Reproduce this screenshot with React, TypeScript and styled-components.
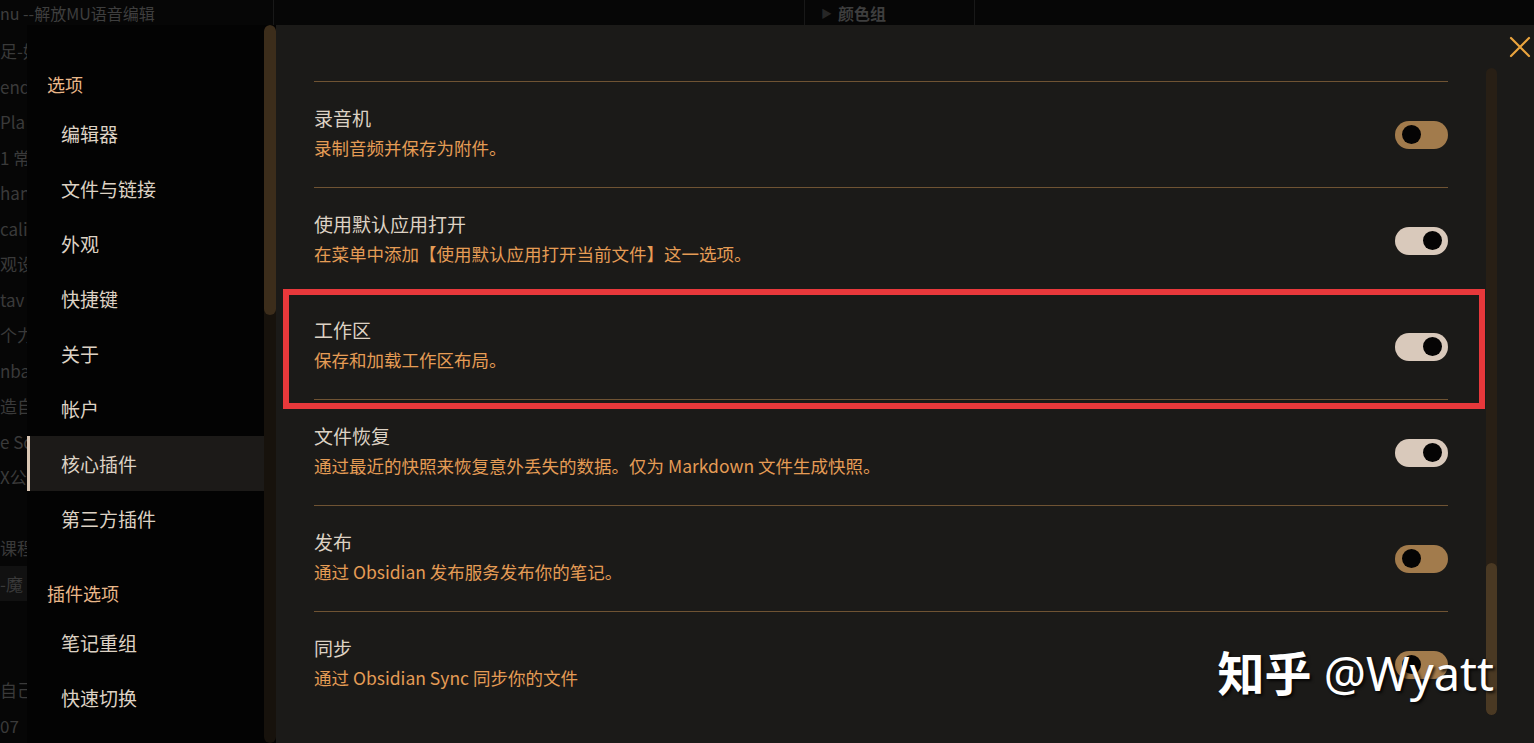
import { createGlobalStyle } from "styled-components";
import styled from "styled-components";

type PluginRow = {
  title: string;
  desc: string;
  enabled: boolean;
  highlight?: boolean;
};

const GlobalStyle = createGlobalStyle`
  html, body {
    margin: 0;
    padding: 0;
    background: #060606;
    overflow: hidden;
  }
  * {
    box-sizing: border-box;
  }
`;

const cjk = `"Noto Sans CJK SC", "Noto Sans", sans-serif`;

const Page = styled.div`
  width: 1534px;
  height: 743px;
  display: grid;
  grid-template-columns: 27px 1fr;
  grid-template-rows: 25px 1fr;
  background: #060606;
  font-family: ${cjk};
  overflow: hidden;
`;

/* dimmed app behind the modal */
const BackTopBar = styled.div`
  grid-column: 1 / 3;
  display: flex;
  align-items: center;
  color: #3e3e3e;
  font-size: 16px;
  white-space: nowrap;
  overflow: hidden;
`;

const BackPane = styled.div<{ $w: number; $pad?: number; $line?: boolean }>`
  width: ${({ $w }) => $w}px;
  height: 100%;
  flex-shrink: 0;
  display: flex;
  align-items: center;
  gap: 6px;
  padding-left: ${({ $pad }) => $pad ?? 0}px;
  border-right: ${({ $line }) => ($line ? "1px solid #181818" : "none")};
  overflow: hidden;
`;

const BackStrip = styled.div`
  display: flex;
  flex-direction: column;
  padding-top: 8px;
  overflow: hidden;
`;

const BackItem = styled.div<{ $shade?: boolean }>`
  height: 36.5px;
  line-height: 36px;
  font-size: 17px;
  color: #3a3a3a;
  white-space: nowrap;
  overflow: hidden;
  background: ${({ $shade }) => ($shade ? "#111111" : "transparent")};
`;

/* modal */
const Modal = styled.div`
  position: relative;
  display: flex;
  min-height: 0;
`;

const Sidebar = styled.div`
  display: flex;
  width: 249px;
  flex-shrink: 0;
  background: #030303;
`;

const Nav = styled.nav`
  width: 237px;
  padding-top: 44px;
  display: flex;
  flex-direction: column;
`;

const NavHeader = styled.div`
  padding-left: 20px;
  height: 30px;
  line-height: 30px;
  font-size: 18px;
  color: #e9b789;
  margin-bottom: 7px;
`;

const NavItem = styled.div<{ $active?: boolean }>`
  height: 55px;
  line-height: 55px;
  padding-left: ${({ $active }) => ($active ? "31px" : "34px")};
  font-size: 19px;
  color: #ddd2c4;
  background: ${({ $active }) => ($active ? "#1c1a18" : "transparent")};
  border-left: ${({ $active }) => ($active ? "3px solid #d9c6b3" : "none")};
`;

const NavGap = styled.div`
  height: 32px;
`;

const ScrollTrack = styled.div<{ $w: number; $bg: string }>`
  width: ${({ $w }) => $w}px;
  background: ${({ $bg }) => $bg};
  border-radius: 6px;
  display: flex;
  flex-direction: column;
  overflow: hidden;
`;

const ScrollThumb = styled.div<{ $h: number; $top: number; $bg: string }>`
  height: ${({ $h }) => $h}px;
  margin-top: ${({ $top }) => $top}px;
  background: ${({ $bg }) => $bg};
  border-radius: 6px;
  flex-shrink: 0;
`;

const Content = styled.div`
  flex: 1;
  display: flex;
  background: #1b1a18;
  min-width: 0;
`;

const List = styled.div`
  width: 1172px;
  padding: 56px 0 0 38px;
  display: flex;
  flex-direction: column;
`;

const Row = styled.div`
  position: relative;
  display: flex;
  align-items: center;
  justify-content: space-between;
  height: 106px;
  padding-bottom: 3px;
  border-top: 1px solid #6f5333;
`;

const Info = styled.div`
  display: flex;
  flex-direction: column;
  gap: 6px;
`;

const Title = styled.div`
  font-size: 19px;
  line-height: 24px;
  color: #ddd2c4;
`;

const Desc = styled.div`
  font-size: 17.5px;
  line-height: 24px;
  color: #e59c55;
`;

const Toggle = styled.div<{ $on: boolean }>`
  width: 53px;
  height: 28px;
  margin-top: 3px;
  border-radius: 14px;
  background: ${({ $on }) => ($on ? "#d9c9bb" : "#a27b4c")};
  display: flex;
  align-items: center;
  justify-content: ${({ $on }) => ($on ? "flex-end" : "flex-start")};
  padding: 0 6px 0 7px;
`;

const Knob = styled.div`
  width: 19px;
  height: 19px;
  border-radius: 50%;
  background: #050404;
`;

const HighlightBox = styled.div`
  position: absolute;
  left: -31px;
  right: -37px;
  top: -5px;
  bottom: -10px;
  border: 6px solid #e8383b;
  pointer-events: none;
`;

const Gutter = styled.div`
  flex: 1;
  display: flex;
  padding: 43px 0 28px 38px;
`;

const CloseButton = styled.div`
  position: absolute;
  top: 10px;
  right: 2px;
  width: 24px;
  height: 24px;
  display: grid;
  place-items: center;
`;

const Watermark = styled.div`
  position: absolute;
  right: 40px;
  bottom: 46px;
  font-family: "Noto Sans", "Noto Sans CJK SC", sans-serif;
  font-size: 47px;
  line-height: 1;
  color: #ffffff;
  white-space: nowrap;
  text-shadow: 2px 2px 3px rgba(0, 0, 0, 0.8);
`;

const WatermarkBrand = styled.span`
  font-weight: 700;
`;

const rows: PluginRow[] = [
  { title: "录音机", desc: "录制音频并保存为附件。", enabled: false },
  {
    title: "使用默认应用打开",
    desc: "在菜单中添加【使用默认应用打开当前文件】这一选项。",
    enabled: true,
  },
  { title: "工作区", desc: "保存和加载工作区布局。", enabled: true, highlight: true },
  {
    title: "文件恢复",
    desc: "通过最近的快照来恢复意外丢失的数据。仅为 Markdown 文件生成快照。",
    enabled: true,
  },
  { title: "发布", desc: "通过 Obsidian 发布服务发布你的笔记。", enabled: false },
  { title: "同步", desc: "通过 Obsidian Sync 同步你的文件", enabled: false },
];

const backItems = [
  "足-好",
  "enda",
  " Pla",
  "1 常",
  "han",
  "cali",
  "观设",
  "tav",
  "个力",
  "nba",
  "造自",
  "e Sc",
  "X公",
  "",
  "课程",
  "-魔",
  "",
  "",
  "自己",
  "07",
];

export default function App() {
  return (
    <>
      <GlobalStyle />
      <Page>
        <BackTopBar>
          <BackPane $w={274} $line>
            nu --解放MU语音编辑
          </BackPane>
          <BackPane $w={531} $line />
          <BackPane $w={170} $pad={16} $line>
            <span style={{ fontSize: 11, color: "#262626" }}>▶</span>
            <span style={{ fontWeight: 700 }}>颜色组</span>
          </BackPane>
          <BackPane $w={559} />
        </BackTopBar>

        <BackStrip>
          {backItems.map((t, i) => (
            <BackItem key={i} $shade={i === 15}>
              {t}
            </BackItem>
          ))}
        </BackStrip>

        <Modal>
          <Sidebar>
            <Nav>
              <NavHeader>选项</NavHeader>
              <NavItem>编辑器</NavItem>
              <NavItem>文件与链接</NavItem>
              <NavItem>外观</NavItem>
              <NavItem>快捷键</NavItem>
              <NavItem>关于</NavItem>
              <NavItem>帐户</NavItem>
              <NavItem $active>核心插件</NavItem>
              <NavItem>第三方插件</NavItem>
              <NavGap />
              <NavHeader>插件选项</NavHeader>
              <NavItem>笔记重组</NavItem>
              <NavItem>快速切换</NavItem>
            </Nav>
            <ScrollTrack $w={12} $bg="#17120c">
              <ScrollThumb $h={290} $top={0} $bg="#3c2d1b" />
            </ScrollTrack>
          </Sidebar>

          <Content>
            <List>
              {rows.map((r) => (
                <Row key={r.title}>
                  <Info>
                    <Title>{r.title}</Title>
                    <Desc>{r.desc}</Desc>
                  </Info>
                  <Toggle $on={r.enabled}>
                    <Knob />
                  </Toggle>
                  {r.highlight && <HighlightBox />}
                </Row>
              ))}
            </List>
            <Gutter>
              <ScrollTrack $w={11} $bg="#281f15">
                <ScrollThumb $h={152} $top={495} $bg="#4a3923" />
              </ScrollTrack>
            </Gutter>
          </Content>

          <CloseButton>
            <svg width="22" height="22" viewBox="0 0 22 22">
              <path
                d="M2 2 L20 20 M20 2 L2 20"
                stroke="#eaa43e"
                strokeWidth="2.2"
                strokeLinecap="round"
              />
            </svg>
          </CloseButton>

          <Watermark>
            <WatermarkBrand>知乎</WatermarkBrand> @Wyatt
          </Watermark>
        </Modal>
      </Page>
    </>
  );
}
